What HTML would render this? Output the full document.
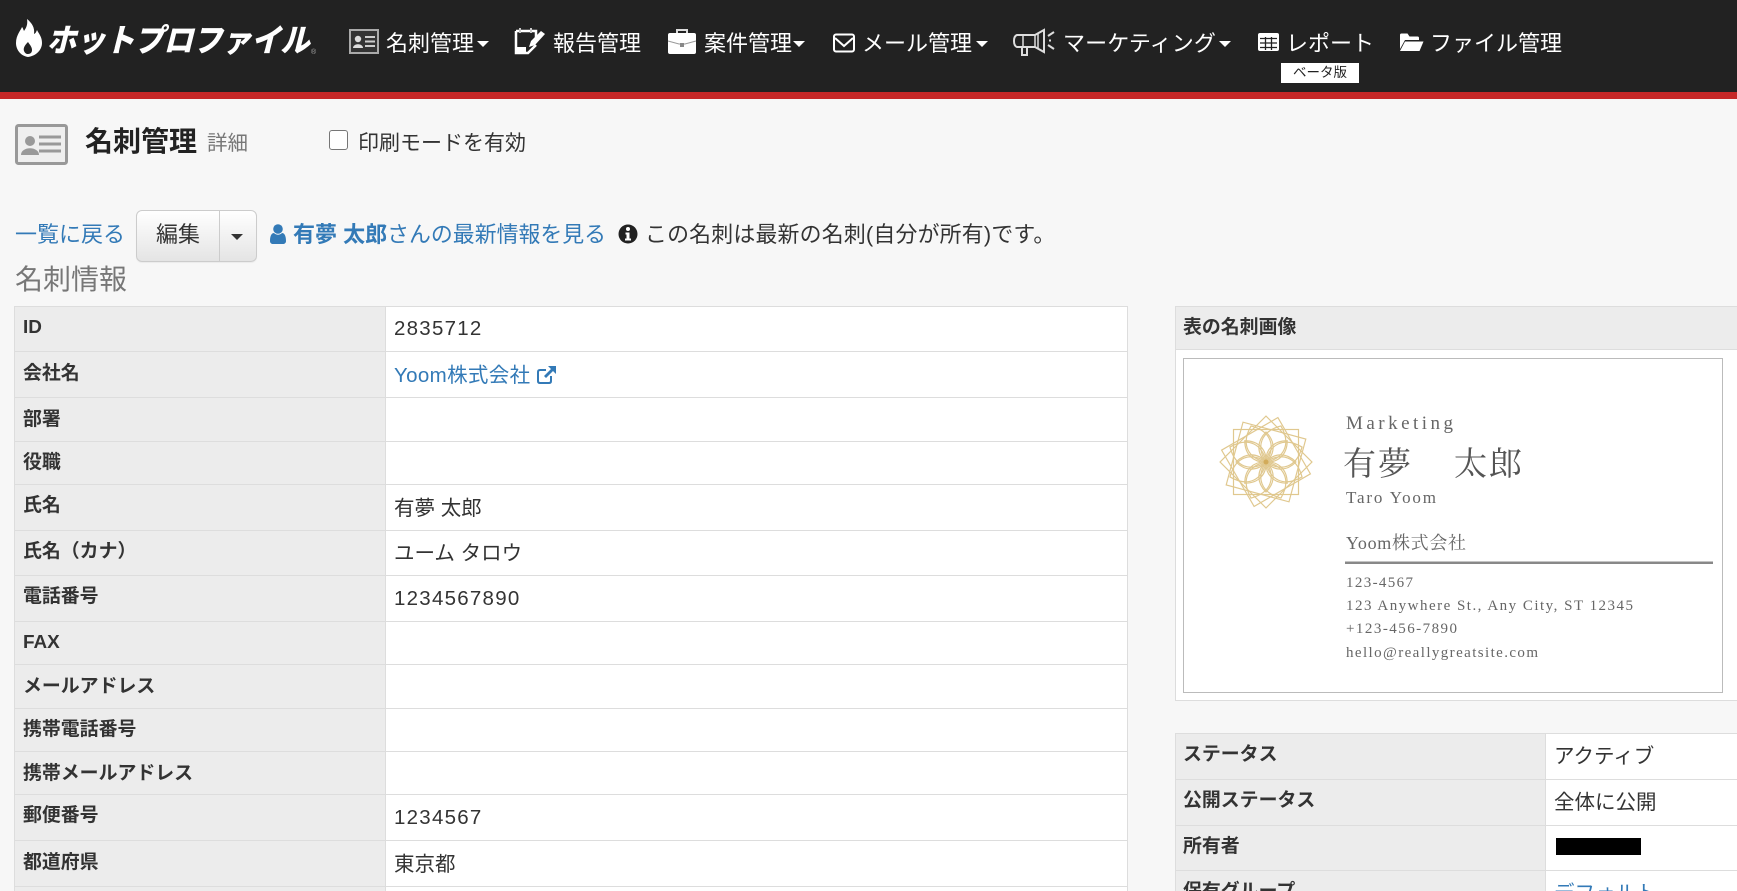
<!DOCTYPE html>
<html lang="ja"><head><meta charset="utf-8"><title>名刺管理 詳細</title>
<style>
*{box-sizing:border-box}
html,body{margin:0;padding:0;width:1737px;height:891px;overflow:hidden}
body{background:#f7f7f7;color:#333;font-family:"Liberation Sans","Noto Sans CJK JP",sans-serif}
#w{position:relative;width:1737px;height:891px;overflow:hidden;background:#f7f7f7}
.t{position:absolute;white-space:nowrap;line-height:1}
a{color:#337ab7;text-decoration:none}
svg{position:absolute;overflow:visible}
#hd{position:absolute;left:0;top:0;width:1737px;height:99px;background:#222;border-bottom:7px solid #c62828}
.n{color:#fff;font-size:22px;font-weight:400}
.c{position:absolute;width:0;height:0;border-left:6px solid transparent;border-right:6px solid transparent;border-top:6.5px solid #fff;top:41px}
table{position:absolute;border-collapse:collapse;table-layout:fixed;background:#fff}
th,td{border:1px solid #ddd;padding:0}
th{background:#ececec;text-align:left;font-size:18.9px;font-weight:bold;padding-left:8px;padding-bottom:5px;color:#333}
td{font-size:20.5px;padding-left:8px;padding-bottom:4px;color:#333}
td.d{letter-spacing:1.25px;padding-bottom:0}
tr.h th{padding-bottom:8px}
#r th{padding-left:7px;padding-bottom:8px}
#r td{padding-left:8px;padding-bottom:6px}
</style></head><body><div id="w">
<div id="hd">
 <svg style="left:0;top:0" width="60" height="90" viewBox="0 0 60 90"><path fill="#fff" fill-rule="evenodd" d="M27 19c1 6-1 9-3 12-1-2-1-3-2-4-1 3-6 8-6 16 0 7 5 13 12 14 8-1 14-7 14-14 0-6-3-9-5-13-1 2-1 3-3 4 1-6-2-11-7-15zM28 42c-3 3-5 6-4 9 1 2 2 3 4 3 3 0 4-2 4-4 0-3-2-5-4-8z"/></svg>
 <div class="t" style="left:49px;top:27px;font-size:30px;font-weight:900;color:#fff;transform-origin:0 50%;transform:skewX(-14deg) scale(.98,1.06);letter-spacing:-.2px">ホットプロファイル</div>
 <div class="t" style="left:311px;top:49px;font-size:7px;color:#aaa">®</div>

 <svg style="left:349px;top:29px" width="30" height="26" viewBox="0 0 30 26"><rect x="1" y="1" width="28" height="23" fill="#333" stroke="#aaa" stroke-width="2"/><circle cx="9" cy="10" r="3.200" fill="#ddd"/><path d="M4 19c0-5 10-5 10 0z" fill="#ddd"/><path d="M16 8h10M16 12.500h10M16 17h10" stroke="#ccc" stroke-width="2"/></svg>
 <div class="t n" style="left:386px;top:33px">名刺管理</div><div class="c" style="left:477px"></div>

 <svg style="left:514px;top:27px" width="32" height="28" viewBox="0 0 32 28"><path d="M2 4h20v8M2 4v22h12l8-8" fill="none" stroke="#fff" stroke-width="2.500"/><path d="M6 1v5M17 1v5" stroke="#ccc" stroke-width="2"/><path d="M3 20h9v6H3z" fill="#fff"/><path d="M15 20l2-6L27 4l4 3-10 11z" fill="#fff"/></svg>
 <div class="t n" style="left:553px;top:33px">報告管理</div>

 <svg style="left:667px;top:28px" width="30" height="27" viewBox="0 0 30 27"><path d="M10 5V2h10v3" fill="none" stroke="#ddd" stroke-width="2"/><path d="M3 5h24q2 0 2 2v17q0 2-2 2H3q-2 0-2-2V7q0-2 2-2z" fill="#fff"/><path d="M1 13l11 3h6l11-3" fill="none" stroke="#999" stroke-width="1"/><rect x="13" y="15" width="4" height="4" fill="#888"/></svg>
 <div class="t n" style="left:704px;top:33px">案件管理</div><div class="c" style="left:793px"></div>

 <svg style="left:833px;top:33px" width="22" height="20" viewBox="0 0 22 20"><rect x="1" y="1.500" width="20" height="17" rx="2" fill="none" stroke="#fff" stroke-width="2"/><path d="M2 5l9 8 9-8" fill="none" stroke="#fff" stroke-width="2"/></svg>
 <div class="t n" style="left:862px;top:33px">メール管理</div><div class="c" style="left:976px"></div>

 <svg style="left:1013px;top:28px" width="42" height="28" viewBox="0 0 42 28"><path d="M10 7h12L31 2v22l-9-5H4q-3-1-3-6t3-6z" fill="none" stroke="#ddd" stroke-width="2"/><path d="M10 7v12M22 7v12M25 5v16" stroke="#ddd" stroke-width="1.500"/><path d="M9 19h5v8H9z" fill="none" stroke="#ddd" stroke-width="2"/><path d="M35 8l6-4M35 17l6 4M36 12.500h2" stroke="#ddd" stroke-width="2"/></svg>
 <div class="t n" style="left:1063px;top:33px;letter-spacing:.1px">マーケティング</div><div class="c" style="left:1219px"></div>

 <svg style="left:1258px;top:32px" width="22" height="20" viewBox="0 0 22 20"><rect x="0" y="1" width="21" height="18" rx="2" fill="#fff"/><path d="M2 6.500h17M2 11h17M2 15.500h17M7.500 5v13M13.500 5v13" stroke="#222" stroke-width="1.300"/></svg>
 <div class="t n" style="left:1286px;top:33px">レポート</div>

 <svg style="left:1399px;top:32px" width="25" height="20" viewBox="0 0 25 20"><path d="M1 3q0-1.500 1.500-1.500h6l2 3h8q1.500 0 1.500 1.500v2H6l-5 9z" fill="#fff"/><path d="M6 9.500h18.500l-4 9.500H1z" fill="#fff"/></svg>
 <div class="t n" style="left:1430px;top:33px">ファイル管理</div>

 <div class="t" style="left:1281px;top:63px;width:78px;height:20px;background:#fff;color:#222;font-size:13.500px;line-height:19px;text-align:center">ベータ版</div>
</div>

<svg style="left:15px;top:124px" width="53" height="41" viewBox="0 0 53 41"><rect x="1.500" y="1.500" width="50" height="38" rx="2" fill="#efefef" stroke="#999" stroke-width="3"/><circle cx="15" cy="17" r="5" fill="#999"/><path d="M6 31c0-9 18-9 18 0z" fill="#999"/><path d="M24 13h22M24 20h22M24 27h22" stroke="#999" stroke-width="3"/></svg>
<div class="t" style="left:85px;top:128px;font-size:28px;font-weight:bold;color:#222">名刺管理</div>
<div class="t" style="left:207px;top:134px;font-size:20.500px;color:#777">詳細</div>
<div style="position:absolute;left:329px;top:130px;width:19px;height:20px;border:1px solid #767676;border-radius:3px;background:#fff"></div>
<div class="t" style="left:358px;top:133px;font-size:21px">印刷モードを有効</div>

<a class="t" href="#" style="left:15px;top:224px;font-size:22px">一覧に戻る</a>
<div style="position:absolute;left:136px;top:210px;width:121px;height:52px;border:1px solid #ccc;border-radius:6px;background:linear-gradient(#fff,#e4e4e4);box-shadow:0 1px 1px rgba(0,0,0,.05)"><div style="position:absolute;left:82px;top:0;width:1px;height:50px;background:#ccc"></div>
<div class="t" style="left:19px;top:13px;font-size:22px;color:#333">編集</div>
<div style="position:absolute;left:94px;top:23px;width:0;height:0;border-left:6px solid transparent;border-right:6px solid transparent;border-top:6px solid #333"></div></div>
<svg style="left:270px;top:224px" width="16" height="20" viewBox="0 0 16 20"><circle cx="8" cy="5" r="4.800" fill="#337ab7"/><path d="M0 17c0-6 2-8 4-8 1 1 2.500 1.800 4 1.800S11 10 12 9c2 0 4 2 4 8 0 2-1.500 3-3 3H3c-1.500 0-3-1-3-3z" fill="#337ab7"/></svg>
<a class="t" href="#" style="left:293px;top:224px;font-size:21.900px"><b style="font-size:22px">有夢 太郎</b><span>さんの最新情報を見る</span></a>
<svg style="left:618px;top:224px" width="20" height="20" viewBox="0 0 20 20"><circle cx="10" cy="10" r="9.500" fill="#222"/><circle cx="10" cy="5" r="2" fill="#fff"/><path d="M7.500 8.500h4v6h1.500v2H7v-2h1.500v-4h-1z" fill="#fff"/></svg>
<div class="t" style="left:645px;top:224px;font-size:21.900px;letter-spacing:.2px">この名刺は最新の名刺(自分が所有)です。</div>
<div class="t" style="left:15px;top:266px;font-size:28px;color:#777">名刺情報</div>

<table style="left:14px;top:306px;width:1114px">
<colgroup><col style="width:371px"><col></colgroup>
<tr style="height:45px"><th style="padding-bottom:3px">ID</th><td class="d">2835712</td></tr>
<tr style="height:46px"><th style="padding-bottom:7px">会社名</th><td><a href="#" style="letter-spacing:.35px">Yoom株式会社 <svg style="position:static;vertical-align:-2px" width="20" height="18" viewBox="0 0 20 18"><path d="M14 10v5q0 2-2 2H3q-2 0-2-2V6q0-2 2-2h6" fill="none" stroke="#337ab7" stroke-width="2"/><path d="M11 0h8v8l-3-3-7 7-2-2 7-7z" fill="#337ab7"/></svg></a></td></tr>
<tr style="height:44px"><th>部署</th><td></td></tr>
<tr style="height:43px"><th>役職</th><td></td></tr>
<tr class="h" style="height:46px"><th>氏名</th><td>有夢 太郎</td></tr>
<tr class="h" style="height:45px"><th>氏名（カナ）</th><td>ユーム タロウ</td></tr>
<tr class="h" style="height:46px"><th>電話番号</th><td class="d">1234567890</td></tr>
<tr style="height:43px"><th style="padding-bottom:1px">FAX</th><td></td></tr>
<tr style="height:44px"><th>メールアドレス</th><td></td></tr>
<tr style="height:43px"><th>携帯電話番号</th><td></td></tr>
<tr style="height:43px"><th style="padding-bottom:3px">携帯メールアドレス</th><td></td></tr>
<tr class="h" style="height:46px"><th>郵便番号</th><td class="d">1234567</td></tr>
<tr style="height:46px"><th style="padding-bottom:7px">都道府県</th><td>東京都</td></tr>
<tr style="height:46px"><th></th><td></td></tr>
</table>

<div style="position:absolute;left:1175px;top:306px;width:600px;height:395px;background:#fff;border:1px solid #ddd"><div style="height:43px;background:#ececec;border-bottom:1px solid #ddd"></div></div>
<div class="t" style="left:1183px;top:319px;font-size:18.900px;font-weight:bold">表の名刺画像</div>
<div style="position:absolute;left:1183px;top:358px;width:540px;height:335px;border:1px solid #bbb;background:#fff"></div>

<svg style="left:1266px;top:461.500px" width="1" height="1" viewBox="0 0 1 1">
 <g fill="none" stroke="#e0c88f" stroke-width="1.200">
  <rect x="-32.500" y="-32.500" width="65" height="65" transform="rotate(0)"/>
  <rect x="-32.500" y="-32.500" width="65" height="65" transform="rotate(45)"/>
  <rect x="-32.500" y="-32.500" width="65" height="65" transform="rotate(-30)"/>
  <rect x="-32.500" y="-32.500" width="65" height="65" transform="rotate(15)"/>
  <g id="p"><path d="M0 0C-9-8-10-20 0-30 10-20 9-8 0 0z"/><path transform="rotate(22.500)" d="M0 0C-15-10-17-26 0-39 17-26 15-10 0 0z"/></g>
  <use href="#p" transform="rotate(45)"/><use href="#p" transform="rotate(90)"/><use href="#p" transform="rotate(135)"/><use href="#p" transform="rotate(180)"/><use href="#p" transform="rotate(225)"/><use href="#p" transform="rotate(270)"/><use href="#p" transform="rotate(315)"/>
 </g>
 <circle r="2.500" fill="#d2ab5a"/>
</svg>
<svg style="left:0;top:0" width="1737" height="891" viewBox="0 0 1737 891" font-family="'Liberation Serif','Noto Serif CJK SC',serif" fill="#666">
 <text x="1346" y="429" font-size="19" textLength="107">Marketing</text>
 <text x="1343" y="475" font-size="33" fill="#555" font-family="'Noto Serif CJK SC',serif" textLength="68">有夢</text>
 <text x="1454" y="475" font-size="33" fill="#555" font-family="'Noto Serif CJK SC',serif" textLength="68">太郎</text>
 <text x="1346" y="503" font-size="17" textLength="90">Taro Yoom</text>
 <text x="1346" y="549" font-size="18" textLength="120">Yoom株式会社</text>
 <rect x="1345" y="561.500" width="368" height="2.500" fill="#888"/>
 <text x="1346" y="587" font-size="15" textLength="67">123-4567</text>
 <text x="1346" y="610" font-size="15" textLength="287">123 Anywhere St., Any City, ST 12345</text>
 <text x="1346" y="633" font-size="15" textLength="111">+123-456-7890</text>
 <text x="1346" y="657" font-size="15" textLength="192">hello@reallygreatsite.com</text>
</svg>

<table id="r" style="left:1175px;top:733px;width:600px">
<colgroup><col style="width:370px"><col></colgroup>
<tr style="height:46px"><th>ステータス</th><td>アクティブ</td></tr>
<tr style="height:46px"><th>公開ステータス</th><td>全体に公開</td></tr>
<tr style="height:45px"><th>所有者</th><td></td></tr>
<tr style="height:46px"><th>保有グループ</th><td><a href="#">デフォルト</a></td></tr>
</table>
<div style="position:absolute;left:1556px;top:838px;width:85px;height:17px;background:#000"></div>
</div></body></html>
